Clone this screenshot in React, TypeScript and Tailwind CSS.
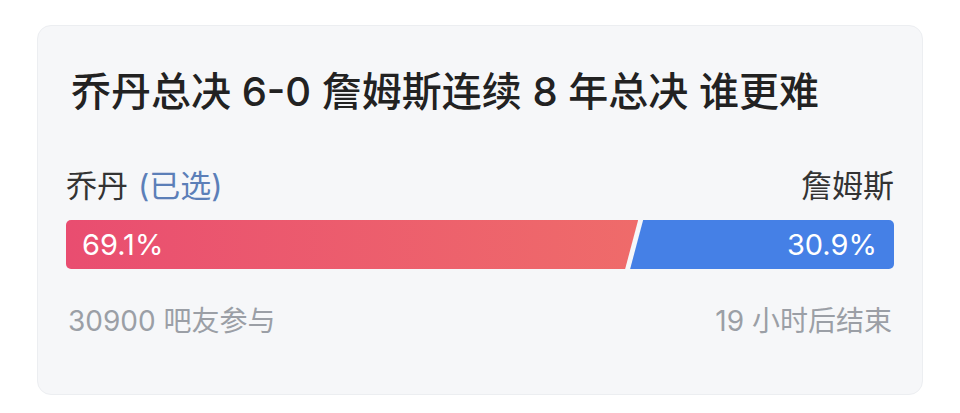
import React from "react";

const poll = {
  title: "乔丹总决 6-0 詹姆斯连续 8 年总决 谁更难",
  left: { name: "乔丹", percent: 69.1, picked: true },
  right: { name: "詹姆斯", percent: 30.9 },
  joined: 30900,
  endsIn: "19 小时后结束",
};

const font = "font-['Inter','Noto_Sans_CJK_SC',sans-serif]";

export default function App() {
  return (
    <div className={`min-h-screen bg-white pl-[37px] pt-[25px] ${font}`}>
      <div className="w-[886px] h-[370px] rounded-[14px] border border-[#eceef1] bg-[#f6f7f9] px-[28px] pt-[42px]">
        {/* Title */}
        <h1 className="ml-[5px] text-[40px] leading-[48px] font-medium text-[#222] whitespace-nowrap">
          {poll.title}
        </h1>

        {/* Options */}
        <div className="mt-[50px] flex items-center justify-between text-[31px] leading-[40px] text-[#333]">
          <div>
            {poll.left.name}
            {poll.left.picked && (
              <span className="ml-[10px] text-[#5c7fb8]">(已选)</span>
            )}
          </div>
          <div>{poll.right.name}</div>
        </div>

        {/* Bar */}
        <div className="mt-[14px] flex h-[49px] overflow-hidden rounded-[5px] text-[29px] text-white">
          <div
            className="flex shrink-0 items-center bg-gradient-to-r from-[#e94d70] to-[#ef6b6a] pl-[16px] [clip-path:polygon(0_0,100%_0,calc(100%-13px)_100%,0_100%)]"
            style={{ width: `${poll.left.percent}%` }}
          >
            {poll.left.percent}%
          </div>
          <div className="-ml-[8px] flex flex-1 items-center justify-end bg-[#4580e6] pr-[17px] [clip-path:polygon(13px_0,100%_0,100%_100%,0_100%)]">
            {poll.right.percent}%
          </div>
        </div>

        {/* Footer */}
        <div className="mt-[32px] flex items-center justify-between text-[28px] leading-[40px] text-[#9b9fa6]">
          <span className="ml-[2px]">{poll.joined} 吧友参与</span>
          <span className="mr-[2px]">{poll.endsIn}</span>
        </div>
      </div>
    </div>
  );
}
